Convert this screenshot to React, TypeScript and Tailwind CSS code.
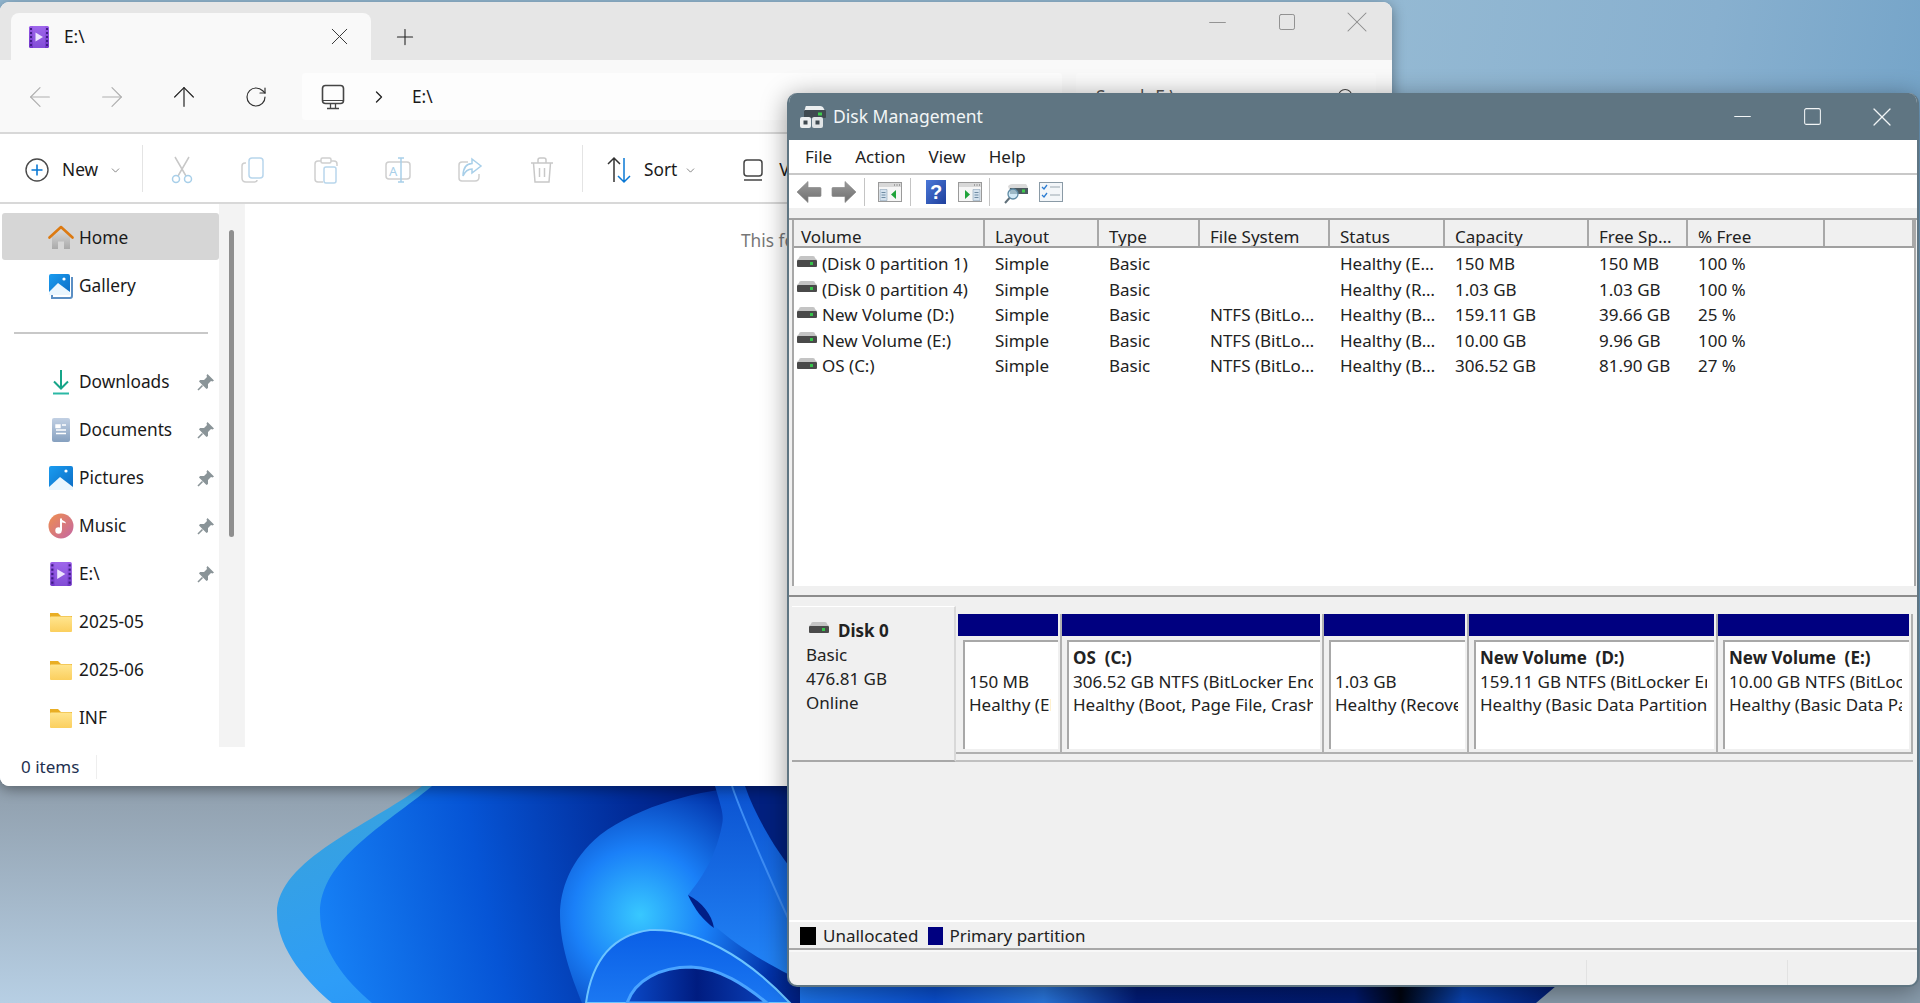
import type { ReactNode } from "react";
import { X, Plus, ArrowLeft, ArrowRight, ArrowUp, RotateCw, ChevronRight, ChevronDown, Search, Minus, Square } from "lucide-react";

const Wallpaper = () => (
  <svg className="absolute inset-0" width="1920" height="1003" viewBox="0 0 1920 1003">
    <defs>
      <linearGradient id="wpSky" x1="1392" y1="0" x2="1920" y2="90" gradientUnits="userSpaceOnUse">
        <stop offset="0" stopColor="#94b9d3" />
        <stop offset="0.6" stopColor="#88b0cf" />
        <stop offset="1" stopColor="#76a5c9" />
      </linearGradient>
      <linearGradient id="wpLow" x1="0" y1="0" x2="0" y2="1">
        <stop offset="0" stopColor="#8f9eac" />
        <stop offset="1" stopColor="#b7cfe4" />
      </linearGradient>
      <linearGradient id="rim" x1="0" y1="0" x2="1" y2="1">
        <stop offset="0" stopColor="#3aa3d8" />
        <stop offset="0.5" stopColor="#2e9df7" />
        <stop offset="1" stopColor="#1f86f5" />
      </linearGradient>
      <linearGradient id="body" x1="320" y1="913" x2="720" y2="830" gradientUnits="userSpaceOnUse">
        <stop offset="0" stopColor="#1680f5" />
        <stop offset="0.4" stopColor="#0655d6" />
        <stop offset="0.8" stopColor="#012a96" />
        <stop offset="1" stopColor="#001a78" />
      </linearGradient>
      <radialGradient id="petal" cx="640" cy="915" r="190" gradientUnits="userSpaceOnUse">
        <stop offset="0" stopColor="#38c8ff" />
        <stop offset="0.35" stopColor="#1a80f8" />
        <stop offset="0.75" stopColor="#0232a8" />
        <stop offset="1" stopColor="#001a78" />
      </radialGradient>
      <linearGradient id="strand" x1="0" y1="0" x2="0" y2="1">
        <stop offset="0" stopColor="#0b52d0" />
        <stop offset="1" stopColor="#2488fa" />
      </linearGradient>
      <linearGradient id="loopA" x1="0" y1="0" x2="0" y2="1">
        <stop offset="0" stopColor="#0a5fe6" />
        <stop offset="1" stopColor="#1b78f2" />
      </linearGradient>
      <linearGradient id="loopB" x1="0" y1="0" x2="1" y2="0">
        <stop offset="0" stopColor="#0a49c8" />
        <stop offset="0.5" stopColor="#001c80" />
        <stop offset="1" stopColor="#0a40b8" />
      </linearGradient>
      <linearGradient id="under" x1="780" y1="0" x2="1556" y2="0" gradientUnits="userSpaceOnUse">
        <stop offset="0" stopColor="#1f7af0" />
        <stop offset="0.2" stopColor="#0a4fd0" />
        <stop offset="0.34" stopColor="#2a78e0" />
        <stop offset="0.46" stopColor="#021c78" />
        <stop offset="0.74" stopColor="#011a70" />
        <stop offset="0.8" stopColor="#00040f" />
        <stop offset="0.88" stopColor="#0a45b5" />
        <stop offset="1" stopColor="#021c72" />
      </linearGradient>
    </defs>
    <rect width="1920" height="1003" fill="url(#wpSky)" />
    <rect y="780" width="800" height="223" fill="url(#wpLow)" />
    <rect x="800" y="780" width="1120" height="223" fill="#8a9dad" />
    <path d="M422 786C370 825 277 860 277 913C277 950 310 985 332 1003L800 1003L800 786Z" fill="url(#rim)" />
    <path d="M432 786C385 825 320 860 320 913C320 950 345 980 372 1003L800 1003L800 786Z" fill="url(#body)" />
    <path d="M750 786C700 790 640 805 600 835C570 860 560 890 560 915C560 950 575 985 582 1003L800 1003L800 786Z" fill="url(#petal)" />
    <path d="M715 786C722 810 724 815 722 825C715 860 700 880 688 895C700 915 730 945 790 975L800 985L800 786Z" fill="url(#strand)" />
    <path d="M732 786C745 825 780 900 800 945" fill="none" stroke="#3d8df5" strokeWidth="2" />
    <path d="M745 786C755 815 775 850 800 880L800 786Z" fill="#02207f" />
    <path d="M688 895C695 910 703 920 714 928C712 915 702 902 688 895Z" fill="#011e86" />
    <path d="M586 1003C592 960 612 935 650 930C695 928 745 955 790 1003Z" fill="url(#loopA)" stroke="#6cc4ff" strokeWidth="2" />
    <path d="M627 1003C635 980 660 967 691 967C720 968 745 985 767 1003Z" fill="url(#loopB)" stroke="#4aa4ff" strokeWidth="3" />
    <path d="M800 986L1556 986L1536 1003L800 1003Z" fill="url(#under)" />
  </svg>
);

const HomeIcon = () => (
  <svg width="26" height="26" viewBox="0 0 26 26">
    <defs>
      <linearGradient id="hb" x1="0" y1="0" x2="0" y2="1">
        <stop offset="0" stopColor="#dcdcdc" />
        <stop offset="1" stopColor="#a9a9a9" />
      </linearGradient>
    </defs>
    <path d="M4 11.5L13 3.5L22 11.5V24H16V16.5H10V24H4Z" fill="url(#hb)" />
    <path d="M1.5 12.5L13 2L24.5 12.5" fill="none" stroke="#dc7a12" strokeWidth="2.6" strokeLinecap="round" strokeLinejoin="round" />
  </svg>
);

const PictureIcon = ({ book = false }: { book?: boolean }) => (
  <svg width="26" height="26" viewBox="0 0 26 26">
    <defs>
      <linearGradient id="pb" x1="0" y1="0" x2="1" y2="1">
        <stop offset="0" stopColor="#1a9cf0" />
        <stop offset="1" stopColor="#0c6cc4" />
      </linearGradient>
    </defs>
    {book && <path d="M4 22V25H22a2 2 0 0 0 2-2V4" fill="none" stroke="#5b8fc4" strokeWidth="2" />}
    <rect x="1" y="1" width={book ? 21 : 24} height={book ? 21 : 24} rx="2" fill="url(#pb)" />
    <path d={book ? "M1 22V19L10 10L22 19V22Z" : "M1 25V22L12 12L25 22V25Z"} fill="#eaf6fe" />
    <circle cx={book ? 16 : 18} cy="6" r="1.6" fill="#ffffff" />
  </svg>
);

const DownloadIcon = () => (
  <svg width="26" height="26" viewBox="0 0 26 26" fill="none" stroke="#17a589" strokeWidth="2">
    <path d="M13 1V19M6 12.5L13 19.5L20 12.5" />
    <path d="M5 24.5H21" stroke="#2bb8a5" />
  </svg>
);

const DocIcon = () => (
  <svg width="26" height="26" viewBox="0 0 26 26">
    <defs>
      <linearGradient id="db" x1="0" y1="0" x2="0" y2="1">
        <stop offset="0" stopColor="#c2d0e3" />
        <stop offset="1" stopColor="#86a0bf" />
      </linearGradient>
    </defs>
    <rect x="4" y="1" width="18" height="24" rx="2" fill="url(#db)" />
    <path d="M8 8H12V10.5H8ZM14 8H18M8 13H18M8 16.5H18" stroke="#ffffff" strokeWidth="1.4" fill="#ffffff" />
  </svg>
);

const MusicIcon = () => (
  <svg width="26" height="26" viewBox="0 0 26 26">
    <defs>
      <linearGradient id="mb" x1="0" y1="0" x2="1" y2="1">
        <stop offset="0" stopColor="#ef8f4e" />
        <stop offset="1" stopColor="#c466a4" />
      </linearGradient>
    </defs>
    <circle cx="13" cy="13" r="12.5" fill="url(#mb)" />
    <path d="M13 5.5V17.5" stroke="#fff" strokeWidth="2" />
    <path d="M13 5.5C14 8 18 8 18 10.5C16.5 9.5 14.5 9.5 13 9.5Z" fill="#fff" />
    <circle cx="10.5" cy="17.5" r="3.2" fill="#fff" />
  </svg>
);

const VideoIcon = ({ size = 24 }: { size?: number }) => (
  <svg width={size} height={size} viewBox="0 0 24 24">
    <defs>
      <linearGradient id="vb" x1="0" y1="0" x2="0" y2="1">
        <stop offset="0" stopColor="#9a5ce8" />
        <stop offset="1" stopColor="#6f35c8" />
      </linearGradient>
    </defs>
    <rect x="2" y="1" width="20" height="22" rx="1.5" fill="url(#vb)" />
    <path d="M6 1H18V23H6Z" fill="#a67cf0" opacity="0.35" />
    {[3, 7, 11, 15, 19].map((y) => (
      <g key={y} fill="#3f1d84">
        <rect x="3" y={y} width="2" height="2" />
        <rect x="19" y={y} width="2" height="2" />
      </g>
    ))}
    <path d="M8.5 7.5L16 12L8.5 16.5Z" fill="#ece4ff" />
  </svg>
);

const FolderIcon = () => (
  <svg width="26" height="26" viewBox="0 0 26 26">
    <defs>
      <linearGradient id="fb" x1="0" y1="0" x2="0" y2="1">
        <stop offset="0" stopColor="#ffe58f" />
        <stop offset="1" stopColor="#fbcf5e" />
      </linearGradient>
    </defs>
    <path d="M2 4H10L13 7H24V9H2Z" fill="#e9ae24" />
    <rect x="2" y="7.5" width="22" height="15.5" rx="1" fill="url(#fb)" />
  </svg>
);

const PinIcon = () => (
  <svg width="18" height="18" viewBox="0 0 18 18" fill="#8a9498">
    <path d="M10.5 1L17 7.5L15.5 8.5L14 8L11 11L11 15L9.5 16L2 8.5L3 7L7 7L10 4L9.5 2.5Z" />
    <path d="M5.5 12.5L1 17" stroke="#8a9498" strokeWidth="1.6" />
  </svg>
);

const MonitorIcon = () => (
  <svg width="24" height="26" viewBox="0 0 24 26" fill="none" stroke="#454545" strokeWidth="1.6">
    <rect x="1.5" y="1.5" width="21" height="18" rx="3" />
    <path d="M1.5 16.5H22.5" strokeWidth="1" />
    <path d="M9.5 20V24M14.5 20V24M6 24.5H18" strokeWidth="1.3" />
  </svg>
);

const NewIcon = () => (
  <svg width="24" height="24" viewBox="0 0 24 24" fill="none">
    <circle cx="12" cy="12" r="11" stroke="#4a4a4a" strokeWidth="1.4" />
    <path d="M12 6.5V17.5M6.5 12H17.5" stroke="#0a78d4" strokeWidth="1.6" />
  </svg>
);

const CmdIcon = ({ children }: { children: ReactNode }) => (
  <div className="flex w-[72px] shrink-0 items-center justify-center">
    <svg width="26" height="28" viewBox="0 0 26 28" fill="none" strokeWidth="1.5">
      {children}
    </svg>
  </div>
);

const DiskGlyph = ({ w = 20 }: { w?: number }) => (
  <svg width={w} height={(w * 13) / 20} viewBox="0 0 20 13">
    <path d="M2 3Q2 1 4 1H16Q18 1 18 3L20 5H0Z" fill="#c4c4c4" />
    <rect y="5" width="20" height="7" rx="1" fill="#4a4a4a" />
    <rect x="13" y="7" width="3" height="3" fill="#35c24a" />
  </svg>
);

const TitleDiskIcon = () => (
  <svg width="26" height="24" viewBox="0 0 26 24">
    <path d="M6 1H20Q23 1 24 4L25 6H4L5 4Q5.5 1 6 1Z" fill="#eceff0" />
    <rect x="4" y="5" width="22" height="8" rx="1" fill="#3f4a50" />
    <rect x="18" y="7.5" width="4" height="3" fill="#3ecb4d" />
    <rect x="0" y="12" width="11" height="11" rx="2" fill="#eceff0" />
    <rect x="12" y="12" width="11" height="11" rx="2" fill="#e0e4e6" />
    <rect x="3.5" y="15.5" width="4" height="4" fill="#3f4a50" />
    <rect x="15.5" y="15.5" width="4" height="4" fill="#3f4a50" />
  </svg>
);

const NavArrow = ({ flip = false }: { flip?: boolean }) => (
  <svg width="26" height="24" viewBox="0 0 26 24" className={flip ? "-scale-x-100" : ""}>
    <defs>
      <linearGradient id="na" x1="0" y1="0" x2="0" y2="1">
        <stop offset="0" stopColor="#9b9b9b" />
        <stop offset="1" stopColor="#6e6e6e" />
      </linearGradient>
    </defs>
    <path d="M1 12L12 1.5V7.5H24Q25 7.5 25 8.5V15.5Q25 16.5 24 16.5H12V22.5Z" fill="url(#na)" stroke="#8a8a8a" strokeWidth="0.7" />
  </svg>
);

const PaneIcon = ({ right = false }: { right?: boolean }) => (
  <svg width="24" height="20" viewBox="0 0 24 20">
    <rect x="0.5" y="0.5" width="23" height="19" fill="#f6f6f6" stroke="#9a9a9a" />
    <rect x="1" y="1" width="22" height="4" fill="#d8d8d8" />
    <path d="M16 3H17M18.5 3H19.5M21 3H22" stroke="#666" />
    {right ? (
      <>
        <path d="M7 8L12 12.5L7 17Z" fill="#1fa33a" />
        <path d="M15 7.5H22V18.5H15Z" fill="#d5e2ee" stroke="#8ea6bb" strokeWidth="0.6" />
        <path d="M16.5 10.5H20.5M16.5 13H20.5M16.5 15.5H20.5" stroke="#6f8ba3" />
      </>
    ) : (
      <>
        <path d="M2 7.5H9V18.5H2Z" fill="#d5e2ee" stroke="#8ea6bb" strokeWidth="0.6" />
        <path d="M3.5 10.5H7.5M3.5 13H7.5M3.5 15.5H7.5" stroke="#6f8ba3" />
        <path d="M18 8L13 12.5L18 17Z" fill="#1fa33a" />
      </>
    )}
  </svg>
);

const sideItems = [
  { label: "Downloads", icon: <DownloadIcon />, pin: true },
  { label: "Documents", icon: <DocIcon />, pin: true },
  { label: "Pictures", icon: <PictureIcon />, pin: true },
  { label: "Music", icon: <MusicIcon />, pin: true },
  { label: "E:\\", icon: <VideoIcon size={26} />, pin: true },
  { label: "2025-05", icon: <FolderIcon />, pin: false },
  { label: "2025-06", icon: <FolderIcon />, pin: false },
  { label: "INF", icon: <FolderIcon />, pin: false },
];

const Explorer = () => (
  <div className="absolute left-0 top-[2px] flex h-[784px] w-[1392px] flex-col overflow-hidden rounded-[9px] bg-white text-[17.3px] text-[#1a1a1a] shadow-[0_3px_14px_rgba(0,0,0,0.4)]">
    {/* Tabs */}
    <div className="flex h-[58px] shrink-0 items-end bg-[#e6e6e6]">
      <div className="ml-[11px] flex h-[47px] w-[360px] items-center rounded-t-[8px] bg-[#f9f9f9] pl-[16px]">
        <VideoIcon />
        <span className="ml-[13px] flex-1">E:\</span>
        <X size={29} strokeWidth={0.8} className="mr-[17px] text-[#333]" />
      </div>
      <div className="ml-[21px] flex h-[47px] items-center">
        <Plus size={26} strokeWidth={1} className="text-[#222]" />
      </div>
      <div className="ml-auto flex h-[58px] self-start pb-[18px] text-[#8a8a8a]">
        <div className="flex w-[70px] items-center justify-center">
          <Minus size={27} strokeWidth={0.8} />
        </div>
        <div className="flex w-[70px] items-center justify-center">
          <Square size={20} strokeWidth={1.1} />
        </div>
        <div className="flex w-[70px] items-center justify-center">
          <X size={36} strokeWidth={0.7} />
        </div>
      </div>
    </div>
    {/* Address row */}
    <div className="flex h-[72px] shrink-0 items-center bg-[#f9f9f9] pl-[4px] pt-[1px]">
      <div className="flex w-[72px] justify-center text-[#b0b0b0]">
        <ArrowLeft size={32} strokeWidth={0.9} />
      </div>
      <div className="flex w-[72px] justify-center text-[#b0b0b0]">
        <ArrowRight size={32} strokeWidth={0.9} />
      </div>
      <div className="flex w-[72px] justify-center text-[#222]">
        <ArrowUp size={32} strokeWidth={0.9} />
      </div>
      <div className="flex w-[72px] justify-center text-[#333]">
        <RotateCw size={24} strokeWidth={1.2} />
      </div>
      <div className="ml-[10px] flex h-[47px] w-[760px] items-center rounded-[4px] bg-[#fdfdfd] pl-[19px]">
        <MonitorIcon />
        <ChevronRight size={20} strokeWidth={1.6} className="ml-[24px] text-[#222]" />
        <span className="ml-[23px]">E:\</span>
      </div>
      <div className="ml-[14px] flex h-[47px] w-[300px] items-center rounded-[4px] bg-[#fbfbfb] pl-[20px] pr-[20px]">
        <span className="flex-1 text-[#555]">Search E:\</span>
        <Search size={20} strokeWidth={1.3} className="text-[#444]" />
      </div>
    </div>
    <div className="h-[2px] shrink-0 bg-[#d8d8d8]" />
    {/* Command bar */}
    <div className="flex h-[68px] shrink-0 items-center bg-white pt-[4px]">
      <div className="ml-[25px] flex w-[117px] items-center">
        <NewIcon />
        <span className="ml-[13px]">New</span>
        <ChevronDown size={13} strokeWidth={1.3} className="ml-[11px] text-[#555]" />
      </div>
      <div className="-mt-[4px] h-[47px] w-px bg-[#e4e4e4]" />
      <div className="ml-[3px] flex">
        <CmdIcon>
          <path d="M6 1L17 20M20 1L9 20" stroke="#c8c8c8" />
          <circle cx="7" cy="23" r="3.5" stroke="#a8cfe9" />
          <circle cx="19" cy="23" r="3.5" stroke="#a8cfe9" />
        </CmdIcon>
        <CmdIcon>
          <path d="M5 7H4Q1 7 1 10V22Q1 26 5 26H13Q16 26 16 24" stroke="#cfcfcf" />
          <rect x="8" y="2" width="14" height="20" rx="3" stroke="#b8d6ec" />
        </CmdIcon>
        <CmdIcon>
          <path d="M8 5H5Q2 5 2 8V23Q2 26 5 26H10M18 5H21Q24 5 24 8V10" stroke="#cfcfcf" />
          <rect x="8" y="2" width="10" height="5" rx="1.5" stroke="#cfcfcf" />
          <rect x="11" y="11" width="12" height="16" rx="2" stroke="#b8d6ec" />
        </CmdIcon>
        <CmdIcon>
          <rect x="1" y="6" width="24" height="17" rx="3" stroke="#cfcfcf" />
          <path d="M16 2V26M13 2H19M13 26H19" stroke="#a8cfe9" />
          <text x="4" y="20" fontSize="13" fill="#a8cfe9" stroke="none" fontFamily="Noto Sans, sans-serif">A</text>
        </CmdIcon>
        <CmdIcon>
          <path d="M11 6H5Q2 6 2 9V22Q2 25 5 25H18Q22 25 22 21V18" stroke="#cfcfcf" />
          <path d="M15 3L24 10L15 17V13Q9 13 6 20Q6 8 15 7.5Z" stroke="#a8cfe9" />
        </CmdIcon>
        <CmdIcon>
          <path d="M2 7H24M9 7V4Q9 2 11 2H15Q17 2 17 4V7M4.5 7L6 26H20L21.5 7M10.5 12V21M15.5 12V21" stroke="#c8c8c8" />
        </CmdIcon>
      </div>
      <div className="-mt-[4px] ml-[4px] h-[47px] w-px bg-[#e4e4e4]" />
      <div className="ml-[23px] flex items-center">
        <svg width="26" height="28" viewBox="0 0 26 28" fill="none" strokeWidth="1.5">
          <path d="M8 26V2M2 8L8 2L14 8" stroke="#333" />
          <path d="M18 2V26M12 20L18 26L24 20" stroke="#0a78d4" />
        </svg>
        <span className="ml-[12px]">Sort</span>
        <ChevronDown size={13} strokeWidth={1.3} className="ml-[7px] text-[#555]" />
      </div>
      <div className="ml-[46px] flex items-center">
        <svg width="20" height="26" viewBox="0 0 20 26" fill="none" stroke="#444" strokeWidth="1.5">
          <rect x="1" y="3" width="18" height="16" rx="3" />
          <path d="M1 23H19" />
        </svg>
        <span className="ml-[16px]">View</span>
      </div>
    </div>
    <div className="h-[2px] shrink-0 bg-[#d8d8d8]" />
    {/* Body */}
    <div className="flex min-h-0 flex-1">
      <div className="flex w-[219px] shrink-0 flex-col pl-[2px] pt-[9px]">
        <div className="flex h-[47px] items-center rounded-[3px] bg-[#d6d6d6] pl-[46px] pt-[2px]">
          <HomeIcon />
          <span className="ml-[5px]">Home</span>
        </div>
        <div className="mt-[2px] flex h-[48px] items-center pl-[46px]">
          <PictureIcon book />
          <span className="ml-[5px]">Gallery</span>
        </div>
        <div className="ml-[12px] mr-[11px] mt-[22px] h-[2px] bg-[#c8c8c8]" />
        <div className="mt-[23.5px] flex flex-col">
          {sideItems.map((item) => (
            <div key={item.label} className="flex h-[48px] items-center pl-[46px] pr-[4px]">
              {item.icon}
              <span className="ml-[5px] flex-1">{item.label}</span>
              {item.pin && <PinIcon />}
            </div>
          ))}
        </div>
      </div>
      <div className="flex w-[25px] shrink-0 justify-center bg-[#f3f3f3] pt-[26px]">
        <div className="mr-[1px] h-[307px] w-[5px] rounded-full bg-[#8f8f8f]" />
      </div>
      <div className="min-w-0 flex-1 border-l border-[#f4f4f4] pl-[496px] pt-[24px] text-[#777]">This folder is empty.</div>
    </div>
    {/* Status */}
    <div className="flex h-[39px] shrink-0 items-center bg-white pl-[21px] text-[17px] text-[#1e3050]">
      <span className="w-[75px]">0 items</span>
      <div className="h-[24px] w-px bg-[#eeeeee]" />
    </div>
  </div>
);

const headers = ["Volume", "Layout", "Type", "File System", "Status", "Capacity", "Free Sp...", "% Free", ""];

const volumes = [
  ["(Disk 0 partition 1)", "Simple", "Basic", "", "Healthy (E…", "150 MB", "150 MB", "100 %"],
  ["(Disk 0 partition 4)", "Simple", "Basic", "", "Healthy (R…", "1.03 GB", "1.03 GB", "100 %"],
  ["New Volume (D:)", "Simple", "Basic", "NTFS (BitLo…", "Healthy (B…", "159.11 GB", "39.66 GB", "25 %"],
  ["New Volume (E:)", "Simple", "Basic", "NTFS (BitLo…", "Healthy (B…", "10.00 GB", "9.96 GB", "100 %"],
  ["OS (C:)", "Simple", "Basic", "NTFS (BitLo…", "Healthy (B…", "306.52 GB", "81.90 GB", "27 %"],
];

const partitions = [
  { width: "w-[104px]", title: "", size: "150 MB", state: "Healthy (EFI System Partition)" },
  { width: "w-[262px]", title: "OS  (C:)", size: "306.52 GB NTFS (BitLocker Encrypted)", state: "Healthy (Boot, Page File, Crash Dump, Basic Data Partition)" },
  { width: "w-[145px]", title: "", size: "1.03 GB", state: "Healthy (Recovery Partition)" },
  { width: "w-[249px]", title: "New Volume  (D:)", size: "159.11 GB NTFS (BitLocker Encrypted)", state: "Healthy (Basic Data Partition)" },
  { width: "w-[195px]", title: "New Volume  (E:)", size: "10.00 GB NTFS (BitLocker Encrypted)", state: "Healthy (Basic Data Partition)" },
];

const DiskManagement = () => (
  <div className="absolute left-[787px] top-[93px] flex h-[894px] w-[1132px] flex-col overflow-hidden rounded-[10px] border-x-2 border-b-2 border-[#5f7582] bg-[#f0f0f0] text-[17px] text-[#222] shadow-[0_4px_26px_rgba(0,0,0,0.4)]">
    <div className="-mx-[2px] flex h-[47px] shrink-0 items-center bg-[#5f7582] pl-[13px] text-[#f2f5f6]">
      <TitleDiskIcon />
      <span className="ml-[7px] text-[17.5px]">Disk Management</span>
      <div className="ml-auto flex items-center text-[#f2f5f6]">
        <div className="flex w-[70px] justify-center">
          <Minus size={27} strokeWidth={0.9} />
        </div>
        <div className="flex w-[70px] justify-center">
          <Square size={21} strokeWidth={1.2} />
        </div>
        <div className="mr-[2px] flex w-[70px] justify-center">
          <X size={32} strokeWidth={0.9} />
        </div>
      </div>
    </div>
    <div className="flex h-[33px] shrink-0 items-center gap-[23px] bg-white pl-[16px] pt-[1px]">
      <span>File</span>
      <span>Action</span>
      <span>View</span>
      <span>Help</span>
    </div>
    <div className="h-[2px] shrink-0 bg-[#c8c8c8]" />
    <div className="flex h-[33px] shrink-0 items-center bg-white pl-[7px] pt-[1px]">
      <NavArrow />
      <div className="ml-[9px]">
        <NavArrow flip />
      </div>
      <div className="ml-[7px] h-[28px] w-px bg-[#c4c4c4]" />
      <div className="ml-[13px]">
        <PaneIcon />
      </div>
      <div className="ml-[8px] h-[28px] w-px bg-[#c4c4c4]" />
      <svg width="20" height="24" viewBox="0 0 20 24" className="ml-[15px]">
        <defs>
          <linearGradient id="hq" x1="0" y1="0" x2="1" y2="1">
            <stop offset="0" stopColor="#4a78d8" />
            <stop offset="1" stopColor="#1f3f9c" />
          </linearGradient>
        </defs>
        <rect width="20" height="24" fill="url(#hq)" />
        <text x="10" y="19" textAnchor="middle" fontSize="20" fontWeight="700" fill="#fff" fontFamily="Liberation Sans, sans-serif">?</text>
      </svg>
      <div className="ml-[12px]">
        <PaneIcon right />
      </div>
      <div className="ml-[7px] h-[28px] w-px bg-[#c4c4c4]" />
      <svg width="24" height="24" viewBox="0 0 24 24" className="ml-[14px]">
        <path d="M4 6Q6 4 8 4H22Q24 6 24 9V13H6Z" fill="#dadada" />
        <rect x="6" y="8" width="18" height="6" fill="#4c5a60" />
        <rect x="18" y="9.5" width="3" height="3" fill="#3ecb4d" />
        <circle cx="9" cy="14" r="5" fill="#bfe0f2" fillOpacity="0.7" stroke="#5e8aa4" strokeWidth="1.3" />
        <path d="M5.5 18L1 23" stroke="#60707a" strokeWidth="2" />
      </svg>
      <svg width="24" height="20" viewBox="0 0 24 20" className="ml-[11px]">
        <rect x="0.5" y="0.5" width="23" height="19" fill="#f3f6f9" stroke="#8a9aa6" />
        <path d="M3 5L5 7L8 3M3 13L5 15L8 11" fill="none" stroke="#2d7dd2" strokeWidth="1.3" />
        <path d="M11 5H21M11 13H21" stroke="#9aa7b0" />
      </svg>
    </div>
    <div className="h-[10px] shrink-0 bg-[#f0f0f0]" />
    <div className="h-[2px] shrink-0 bg-[#a0a0a0]" />
    {/* Volume list */}
    <div className="ml-[3px] mr-[1px] h-[366px] shrink-0 border-l-2 border-r-2 border-[#a8a8a8] bg-white">
      <div className="grid h-[28px] grid-cols-[191px_114px_101px_130px_115px_144px_99px_137px_1fr] border-b-2 border-[#a0a0a0] bg-[#f0f0f0]">
        {headers.map((h, i) => (
          <div key={i} className={`flex items-center overflow-hidden whitespace-nowrap border-r-2 border-[#a8a8a8] pt-[7px] leading-[19px] ${i === 0 ? "pl-[7px]" : "pl-[10px]"}`}>
            {h}
          </div>
        ))}
      </div>
      <div className="pt-[3px]">
        {volumes.map((row) => (
          <div key={row[0]} className="grid h-[25.5px] grid-cols-[191px_114px_101px_130px_115px_144px_99px_137px_1fr] items-center">
            {row.map((cell, i) =>
              i === 0 ? (
                <div key={i} className="flex items-center pl-[3px]">
                  <div className="-mt-[5px] flex">
                    <DiskGlyph />
                  </div>
                  <span className="ml-[5px] whitespace-nowrap">{cell}</span>
                </div>
              ) : (
                <div key={i} className="overflow-hidden whitespace-nowrap pl-[10px]">
                  {cell}
                </div>
              ),
            )}
          </div>
        ))}
      </div>
    </div>
    <div className="h-[9px] shrink-0 bg-[#f0f0f0]" />
    <div className="h-[2px] shrink-0 bg-[#8c8c8c]" />
    {/* Disk graph */}
    <div className="flex h-[323px] shrink-0 items-start pl-[3px] pt-[9px]">
      <div className="h-[156px] w-[164px] shrink-0 border-b-2 border-r-2 border-t border-b-[#a8a8a8] border-r-[#d8d8d8] border-t-white bg-[#f0f0f0] pl-[14px] pt-[12px] leading-[24px]">
        <div className="flex items-center pl-[3px] font-bold">
          <div className="-mt-[7px] flex">
            <DiskGlyph />
          </div>
          <span className="ml-[9px]">Disk 0</span>
        </div>
        <div>Basic</div>
        <div>476.81 GB</div>
        <div>Online</div>
      </div>
      <div className="flex-1">
        <div className="flex h-[148px] w-[957px] border-b-2 border-[#b0b0b0] pl-[2px] pt-[8px]">
          {partitions.map((p) => (
            <div key={p.size} className={`${p.width} shrink-0 border-r-2 border-[#b0b0b0] pr-[2px]`}>
              <div className="h-[22px] bg-[#000080]" />
              <div className="ml-[5px] mt-[4px] h-[109px] overflow-hidden border-l-2 border-t-2 border-[#a8a8a8] bg-white pl-[4px] pt-[4px] leading-[23.5px]">
                <div className="mr-[7px] overflow-hidden whitespace-pre">
                  <div className="h-[23.5px] font-bold">{p.title}</div>
                  <div>{p.size}</div>
                  <div>{p.state}</div>
                </div>
              </div>
            </div>
          ))}
        </div>
        <div className="mt-[6px] h-[2px] w-[957px] bg-[#c0c0c0]" />
      </div>
    </div>
    {/* Legend */}
    <div className="flex h-[30px] shrink-0 items-center border-b-2 border-t-2 border-b-[#a8a8a8] border-t-white pl-[11px] pt-[1px]">
      <div className="h-[18px] w-[16px] bg-black" />
      <span className="ml-[7px]">Unallocated</span>
      <div className="ml-[10px] h-[18px] w-[15px] bg-[#000080]" />
      <span className="ml-[6px]">Primary partition</span>
    </div>
    <div className="flex flex-1 border-t-2 border-[#f8f8f8] pl-[797px] pt-[8px]">
      <div className="h-full w-[201px] border-l border-[#e2e2e2]" />
      <div className="h-full border-l border-[#e2e2e2]" />
    </div>
  </div>
);

export default function App() {
  return (
    <div className="relative h-[1003px] w-[1920px] overflow-hidden font-['Noto_Sans',sans-serif]">
      <Wallpaper />
      <Explorer />
      <DiskManagement />
    </div>
  );
}
